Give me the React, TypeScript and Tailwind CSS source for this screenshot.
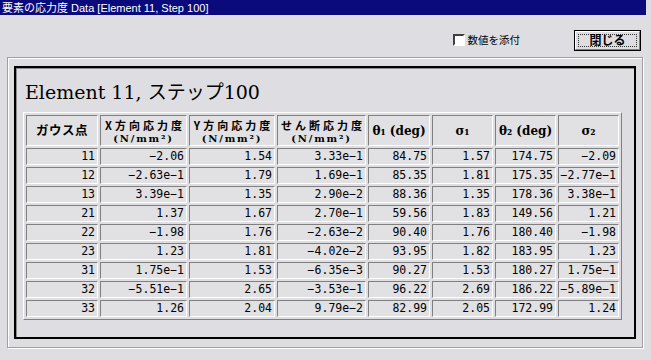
import React from "react";

const rows: string[][] = [
  ["11", "−2.06", "1.54", "3.33e−1", "84.75", "1.57", "174.75", "−2.09"],
  ["12", "−2.63e−1", "1.79", "1.69e−1", "85.35", "1.81", "175.35", "−2.77e−1"],
  ["13", "3.39e−1", "1.35", "2.90e−2", "88.36", "1.35", "178.36", "3.38e−1"],
  ["21", "1.37", "1.67", "2.70e−1", "59.56", "1.83", "149.56", "1.21"],
  ["22", "−1.98", "1.76", "−2.63e−2", "90.40", "1.76", "180.40", "−1.98"],
  ["23", "1.23", "1.81", "−4.02e−2", "93.95", "1.82", "183.95", "1.23"],
  ["31", "1.75e−1", "1.53", "−6.35e−3", "90.27", "1.53", "180.27", "1.75e−1"],
  ["32", "−5.51e−1", "2.65", "−3.53e−1", "96.22", "2.69", "186.22", "−5.89e−1"],
  ["33", "1.26", "2.04", "9.79e−2", "82.99", "2.05", "172.99", "1.24"],
];

const widths = ["w-[72px]", "w-[87px]", "w-[86px]", "w-[89px]", "w-[62px]", "w-[61px]", "w-[61px]", "w-[61px]"];

const cell =
  "border border-t-[#808080] border-l-[#808080] border-b-white border-r-white bg-[#e1e1e4]";

const jp = "font-['Noto_Sans_CJK_JP',sans-serif]";
const serif = "font-['DejaVu_Serif','Noto_Sans_CJK_JP',serif]";

function StressHead({ label }: { label: string }) {
  return (
    <div className="flex flex-col items-center">
      <span className={`${jp} text-[11px] font-bold leading-[16px] tracking-[3px] pl-[3px] whitespace-nowrap`}>
        {label}
      </span>
      <span className={`${serif} text-[10px] font-bold leading-[12px] tracking-[1.8px] whitespace-nowrap`}>
        (N/mm²)
      </span>
    </div>
  );
}

export default function App() {
  return (
    <div className="w-[651px] h-[360px] bg-[#dedee2] text-black overflow-hidden font-['Liberation_Sans','Noto_Sans_CJK_JP',sans-serif]">
      {/* title bar */}
      <div className="h-[15px] bg-[#0a0a7c] text-white text-[11px] leading-[15px] pl-[2px] mr-[5px] whitespace-nowrap">
        <span className={jp}>要素の応力度</span> Data [Element 11, Step 100]
      </div>

      {/* toolbar */}
      <div className="flex items-center justify-end pt-[8px] pr-[10px] h-[42px]">
        <label className="flex items-center gap-[3px] mr-[54px]">
          <span className="w-[12px] h-[12px] bg-white border-2 border-t-[#404040] border-l-[#404040] border-b-white border-r-white" />
          <span className={`${jp} text-[10.5px] leading-[12px]`}>数値を添付</span>
        </label>
        <button className="w-[67px] h-[21px] border border-black bg-[#dedee2] p-0">
          <div className="h-full border border-t-white border-l-white border-b-[#808080] border-r-[#808080] p-[2px]">
            <div className={`h-full border border-dotted border-[#333] flex items-center justify-center ${jp} text-[12px] font-bold leading-none`}>
              閉じる
            </div>
          </div>
        </button>
      </div>

      {/* etched frame */}
      <div className="ml-[7px] w-[636px] h-[291px] border border-[#a0a0a0] shadow-[inset_1px_1px_0_#fff,1px_1px_0_#fff] pt-[8px] pl-[6px]">
        {/* black panel */}
        <div className="w-[622px] h-[273px] border-2 border-black shadow-[inset_1px_1px_0_#8c8c8c] pl-[7px]">
          <div className={`h-[44px] pt-[11px] pl-[2px] ${serif} text-[19px] leading-[24px] whitespace-nowrap`}>
            Element 11, <span className={jp}>ステップ</span>100
          </div>
          <table className="w-[597px] table-fixed border-separate border-spacing-[2px] border border-t-white border-l-white border-b-[#808080] border-r-[#808080]">
            <thead>
              <tr>
                <th className={`${cell} ${widths[0]} h-[31px] ${jp} text-[12.5px] font-bold tracking-[0.5px]`}>ガウス点</th>
                <th className={`${cell} ${widths[1]} h-[31px] p-0 font-normal`}>
                  <StressHead label="X方向応力度" />
                </th>
                <th className={`${cell} ${widths[2]} h-[31px] p-0 font-normal`}>
                  <StressHead label="Y方向応力度" />
                </th>
                <th className={`${cell} ${widths[3]} h-[31px] p-0 font-normal`}>
                  <StressHead label="せん断応力度" />
                </th>
                <th className={`${cell} ${widths[4]} h-[31px] ${serif} text-[12px] font-bold whitespace-nowrap`}>θ₁ (deg)</th>
                <th className={`${cell} ${widths[5]} h-[31px] ${serif} text-[12px] font-bold`}>σ₁</th>
                <th className={`${cell} ${widths[6]} h-[31px] ${serif} text-[12px] font-bold whitespace-nowrap`}>θ₂ (deg)</th>
                <th className={`${cell} ${widths[7]} h-[31px] ${serif} text-[12px] font-bold`}>σ₂</th>
              </tr>
            </thead>
            <tbody>
              {rows.map((r) => (
                <tr key={r[0]}>
                  {r.map((v, i) => (
                    <td
                      key={i}
                      className={`${cell} text-right pr-[2px] p-0 font-['DejaVu_Sans_Mono',monospace] text-[11.5px] leading-[15px]`}
                    >
                      {v}
                    </td>
                  ))}
                </tr>
              ))}
            </tbody>
          </table>
        </div>
      </div>
    </div>
  );
}
